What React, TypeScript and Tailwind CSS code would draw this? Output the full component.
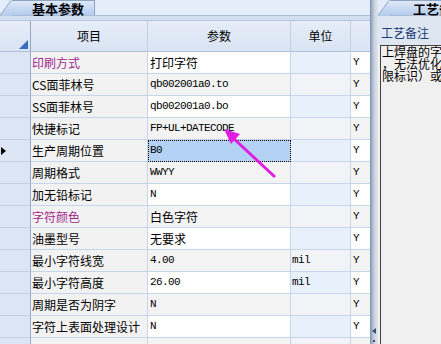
import React from "react";

type Row = {
  name: string;
  value: string;
  unit?: string;
  magenta?: boolean;
  cjkValue?: boolean;
  selected?: boolean;
};

const rows: Row[] = [
  { name: "印刷方式", value: "打印字符", magenta: true, cjkValue: true },
  { name: "CS面菲林号", value: "qb002001a0.to" },
  { name: "SS面菲林号", value: "qb002001a0.bo" },
  { name: "快捷标记", value: "FP+UL+DATECODE" },
  { name: "生产周期位置", value: "B0", selected: true },
  { name: "周期格式", value: "WWYY" },
  { name: "加无铅标记", value: "N" },
  { name: "字符颜色", value: "白色字符", magenta: true, cjkValue: true },
  { name: "油墨型号", value: "无要求", cjkValue: true },
  { name: "最小字符线宽", value: "4.00", unit: "mil" },
  { name: "最小字符高度", value: "26.00", unit: "mil" },
  { name: "周期是否为阴字", value: "N" },
  { name: "字符上表面处理设计", value: "N" },
  { name: "", value: "" },
];

const cjk = "font-['SimSun','Noto_Sans_CJK_SC',sans-serif]";
const mono = "font-['Liberation_Mono',monospace]";

function GridRow({ r, i }: { r: Row; i: number }) {
  const white = i % 2 === 0;
  const paramBg = r.selected ? "bg-[#b4d2f4]" : white ? "bg-white" : "bg-[#f3f3f3]";
  const unitBg = white ? "bg-[#e8f0fb]" : "bg-[#f1f3f7]";
  const yBg = white ? "bg-white" : "bg-[#f3f3f3]";
  return (
    <div className="flex h-[22px] shrink-0">
      <div className="w-[31px] shrink-0 border-r border-b border-r-[#97a8c2] border-b-[#c3d0e4] bg-[#dbe5f3] flex items-center pl-[1px]">
        {r.selected && (
          <svg width="6" height="8" viewBox="0 0 6 8">
            <path d="M0 0 L5 4 L0 8 Z" fill="#000" />
          </svg>
        )}
      </div>
      <div
        className={`w-[117px] shrink-0 border-r border-b border-[#c7d5ec] bg-[#f2f2f2] flex items-center pl-[1px] text-[12px] leading-none ${cjk} ${
          r.magenta ? "text-[#a1288c]" : "text-black"
        }`}
      >
        {r.name}
      </div>
      <div
        className={`w-[143px] shrink-0 border-r border-b border-[#c7d5ec] ${paramBg} flex items-center pl-[2px] text-black leading-none ${
          r.cjkValue ? `${cjk} text-[12px]` : `${mono} text-[11px] tracking-[-0.6px]`
        } ${r.selected ? "outline outline-1 outline-dotted outline-black -outline-offset-1" : ""}`}
      >
        {r.value}
      </div>
      <div
        className={`w-[60px] shrink-0 border-r border-b border-[#c7d5ec] ${unitBg} flex items-center pl-[1px] text-[11px] tracking-[-0.6px] leading-none text-black ${mono}`}
      >
        {r.unit ?? ""}
      </div>
      <div
        className={`w-[19px] shrink-0 border-b border-[#c7d5ec] ${yBg} flex items-center pl-[2px] text-[11px] leading-none text-black ${mono}`}
      >
        {r.name ? "Y" : ""}
      </div>
    </div>
  );
}

function Slant({ h = 16 }: { h?: number }) {
  return (
    <svg width="12" height={h} viewBox={`0 0 12 ${h}`} className="shrink-0 block">
      <defs>
        <linearGradient id="tabg" x1="0" y1="0" x2="0" y2="1">
          <stop offset="0" stopColor="#dfe9f8" />
          <stop offset="1" stopColor="#b3cbec" />
        </linearGradient>
      </defs>
      <path d={`M0 ${h} L11 0 L12 0 L12 ${h} Z`} fill="url(#tabg)" />
      <path d={`M0 ${h - 0.5} L11 0.5`} stroke="#8da3c4" strokeWidth="1" fill="none" />
    </svg>
  );
}

export default function App() {
  return (
    <div className="w-[441px] h-[344px] overflow-hidden flex bg-[#f0f0f0] select-none">
      {/* Left panel */}
      <div className="w-[370px] shrink-0 flex flex-col relative overflow-hidden bg-white">
        {/* tab strip */}
        <div className="h-[16px] shrink-0 flex bg-[#e4edf9] border-b border-[#a9bcd8]">
          <Slant />
          <div
            className={`w-[83px] shrink-0 flex items-center justify-center pl-[10px] bg-gradient-to-b from-[#dfe9f8] to-[#b3cbec] border-r border-t border-[#8da3c4] text-[13px] font-bold leading-none text-black ${cjk}`}
          >
            基本参数
          </div>
          <div className="flex-1" />
        </div>
        <div className="h-[4px] shrink-0 bg-[#d3dff0]" />
        {/* header */}
        <div className="flex h-[32px] shrink-0 bg-gradient-to-b from-[#e6edf8] to-[#d8e3f3] border-t border-[#b7c6dc]">
          <div className="w-[31px] shrink-0 border-r border-b border-r-[#97a8c2] border-b-[#b0c0d8] flex items-end justify-end pb-[2px] pr-[2px]">
            <svg width="9" height="9" viewBox="0 0 9 9">
              <path d="M9 0 L9 9 L0 9 Z" fill="#3a6bc0" />
            </svg>
          </div>
          <div className={`w-[117px] shrink-0 border-r border-b border-r-[#c4d0e2] border-b-[#b0c0d8] flex items-center justify-center text-[12px] leading-none ${cjk}`}>
            项目
          </div>
          <div className={`w-[143px] shrink-0 border-r border-b border-r-[#c4d0e2] border-b-[#b0c0d8] flex items-center justify-center text-[12px] leading-none ${cjk}`}>
            参数
          </div>
          <div className={`w-[60px] shrink-0 border-r border-b border-r-[#c4d0e2] border-b-[#b0c0d8] flex items-center justify-center text-[12px] leading-none ${cjk}`}>
            单位
          </div>
          <div className="w-[19px] shrink-0 border-b border-b-[#b0c0d8]" />
        </div>
        {rows.map((r, i) => (
          <GridRow key={i} r={r} i={i} />
        ))}
        {/* magenta annotation arrow */}
        <svg
          className="absolute left-0 top-0 pointer-events-none"
          width="370"
          height="344"
          viewBox="0 0 370 344"
        >
          <line x1="275" y1="177" x2="232" y2="137" stroke="#e21de2" strokeWidth="3" />
          <path d="M224 129 L240 134 L231 144 Z" fill="#e21de2" />
        </svg>
      </div>

      {/* splitter */}
      <div className="w-[8px] shrink-0 flex flex-col bg-gradient-to-r from-[#7d92b3] via-[#c7d0dd] to-[#e2e6ec]">
        <div className="flex-1" />
        <div className="h-[16px] flex flex-col items-center justify-between pb-[2px]">
          <svg width="4" height="6" viewBox="0 0 4 6">
            <path d="M4 0 L0 3 L4 6 Z" fill="#3d4f6e" />
          </svg>
          <div className="w-[2px] h-[2px] bg-[#3d4f6e]" />
        </div>
      </div>

      {/* right panel */}
      <div className="flex-1 flex flex-col overflow-hidden bg-[#f0f0f0]">
        <div className="h-[16px] shrink-0 flex bg-[#e4edf9] border-b border-[#a9bcd8]">
          <Slant />
          <div
            className={`flex-1 flex items-center pl-[23px] bg-gradient-to-b from-[#dfe9f8] to-[#b3cbec] border-t border-[#8da3c4] text-[13px] font-bold leading-none text-black whitespace-nowrap ${cjk}`}
          >
            工艺备注
          </div>
        </div>
        <div className={`h-[29px] shrink-0 flex items-center pl-[3px] pt-[4px] bg-[#dee6f2] text-[12px] leading-none text-[#1f3d78] whitespace-nowrap ${cjk}`}>
          工艺备注
        </div>
        <div className="flex-1 ml-[2px] border-t border-l border-[#404040] bg-[#f0f0f0] pl-[1px]">
          <div className={`text-[12px] leading-[12px] text-black whitespace-nowrap ${cjk}`}>
            <div>上焊盘的字符</div>
            <div>，无法优化字</div>
            <div>限标识）或者</div>
          </div>
        </div>
      </div>
    </div>
  );
}
